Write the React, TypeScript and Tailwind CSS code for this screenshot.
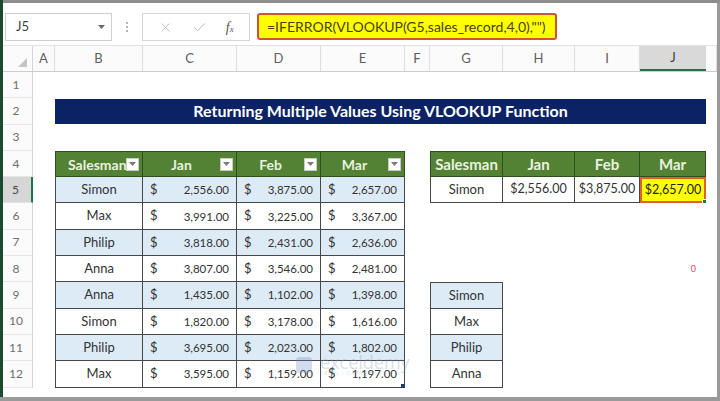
import { X, Check } from "lucide-react"

const COLS = "grid grid-cols-[33px_22px_88px_94px_84px_84px_25px_73px_72px_65px_66px_11px]"

const sales = [
    ["Simon", "2,556.00", "3,875.00", "2,657.00"],
    ["Max", "3,991.00", "3,225.00", "3,367.00"],
    ["Philip", "3,818.00", "2,431.00", "2,636.00"],
    ["Anna", "3,807.00", "3,546.00", "2,481.00"],
    ["Anna", "1,435.00", "1,102.00", "1,398.00"],
    ["Simon", "1,820.00", "3,178.00", "1,616.00"],
    ["Philip", "3,695.00", "2,023.00", "1,802.00"],
    ["Max", "3,595.00", "1,159.00", "1,197.00"],
]

const lookupList = ["Simon", "Max", "Philip", "Anna"]

const FilterButton = () => (
    <span className="w-[13px] h-[13px] bg-white border border-[#c9c9c9] flex items-center justify-center shrink-0 mr-[3px]">
        <svg width="7" height="4" viewBox="0 0 7 4"><path d="M0 0h7L3.5 4z" fill="#7a7a7a" /></svg>
    </span>
)

const RowNum = ({ n, active }: { n: number; active?: boolean }) => (
    <div
        className={
            active
                ? "flex items-center justify-center text-[12px] text-[#4a4a4a] bg-[#d6d6d6] border-r-2 border-r-[#217346] border-b border-b-[#e3e3e3]"
                : "flex items-center justify-center text-[12px] text-[#6e6e6e] bg-[#fbfbfb] border-r border-r-[#d4d4d4] border-b border-b-[#e6e6e6]"
        }
    >
        {n}
    </div>
)

const Money = ({ v, blue }: { v: string; blue: boolean }) => (
    <div className={`flex items-center justify-between px-[7px] text-[12px] text-[#333] border-r border-b border-[#474747] ${blue ? "bg-[#ddebf7]" : "bg-white"}`}>
        <span className="text-[13px]">$</span>
        <span className="text-[11.5px]">{v}</span>
    </div>
)

export default function App() {
    return (
        <div className="relative w-[720px] h-[401px] overflow-hidden bg-white font-['Lato',sans-serif]">
            <div className="h-[3px] bg-[#8e8e8e]" />

            {/* formula bar */}
            <div className="h-[43px] flex items-start pt-[10px] pl-[5px] border-b border-[#e2e2e2]">
                <div className="w-[107px] h-[28px] border border-[#cfcfcf] flex items-center justify-between pl-[10px] pr-[6px]">
                    <span className="text-[13px] text-[#444]">J5</span>
                    <svg width="7" height="4" viewBox="0 0 7 4"><path d="M0 0h7L3.5 4z" fill="#6a6a6a" /></svg>
                </div>
                <div className="w-[30px] h-[28px] flex flex-col items-center justify-center gap-[2px]">
                    <span className="w-[2px] h-[2px] bg-[#b5b5b5]" />
                    <span className="w-[2px] h-[2px] bg-[#b5b5b5]" />
                    <span className="w-[2px] h-[2px] bg-[#b5b5b5]" />
                </div>
                <div className="w-[108px] h-[28px] border border-[#d6d6d6] flex items-center justify-around px-[6px]">
                    <X size={15} strokeWidth={1.4} color="#b9b9b9" />
                    <Check size={15} strokeWidth={1.6} color="#b9b9b9" />
                    <span className="font-['Liberation_Serif',serif] italic text-[14px] text-[#555]">f<span className="text-[9px]">x</span></span>
                </div>
                <div className="ml-[7px] w-[300px] h-[27px] bg-[#ffff00] border-2 border-[#d2542e] rounded-[3px] flex items-center pl-[8px] text-[14px] text-[#4a4200] whitespace-nowrap">
                    =IFERROR(VLOOKUP(G5,sales_record,4,0),"")
                </div>
            </div>

            {/* column headers */}
            <div className={`${COLS} h-[26px] border-b border-[#cdcdcd] bg-[#fbfbfb] text-[13px] text-[#5e5e5e]`}>
                <div className="flex items-end justify-end pr-[5px] pb-[4px] border-r border-[#d4d4d4]">
                    <svg width="9" height="9" viewBox="0 0 9 9"><path d="M9 0v9H0z" fill="#c4c4c4" /></svg>
                </div>
                {["A", "B", "C", "D", "E", "F", "G", "H", "I"].map((c) => (
                    <div key={c} className="flex items-center justify-center border-r border-[#dedede]">{c}</div>
                ))}
                <div className="flex items-center justify-center bg-[#d9d9d9] border-b-2 border-[#217346] text-[#3e3e3e]">J</div>
                <div className="border-r border-[#dedede]" />
            </div>

            {/* rows 1-3 */}
            <div className={`${COLS} h-[26.3px]`}>
                <RowNum n={1} />
            </div>
            <div className={`${COLS} h-[26.3px]`}>
                <RowNum n={2} />
                <div />
                <div className="col-span-9 my-[1px] bg-[#0b2264] flex items-center justify-center text-white font-bold text-[16px]">
                    Returning Multiple Values Using VLOOKUP Function
                </div>
            </div>
            <div className={`${COLS} h-[26.3px]`}>
                <RowNum n={3} />
            </div>

            {/* row 4: headers */}
            <div className={`${COLS} h-[26.3px]`}>
                <RowNum n={4} />
                <div />
                <div className="flex items-center bg-[#548235] border-l border-t border-r border-b border-[#2f4f1f] text-[#e8f2de] font-bold text-[14px]">
                    <span className="flex-1 overflow-hidden whitespace-nowrap pl-[12px]">Salesman</span>
                    <FilterButton />
                </div>
                {["Jan", "Feb", "Mar"].map((m) => (
                    <div key={m} className="flex items-center bg-[#548235] border-t border-r border-b border-[#2f4f1f] text-[#e8f2de] font-bold text-[14px]">
                        <span className="flex-1 text-center">{m}</span>
                        <FilterButton />
                    </div>
                ))}
                <div />
                <div className="flex items-center justify-center bg-[#548235] border-l border-t border-r border-b border-[#2f4f1f] text-[#e8f2de] font-bold text-[15px]">Salesman</div>
                {["Jan", "Feb", "Mar"].map((m) => (
                    <div key={m} className="flex items-center justify-center bg-[#548235] border-t border-r border-b border-[#2f4f1f] text-[#e8f2de] font-bold text-[15px]">{m}</div>
                ))}
            </div>

            {/* rows 5-12 */}
            {sales.map((row, i) => {
                const n = i + 5
                const blue = i % 2 === 0
                const listIdx = n - 9
                return (
                    <div key={n} className={`${COLS} h-[26.3px]`}>
                        <RowNum n={n} active={n === 5} />
                        <div />
                        <div className={`flex items-center justify-center text-[13px] text-[#333] border-l border-r border-b border-[#474747] ${blue ? "bg-[#ddebf7]" : "bg-white"}`}>
                            {row[0]}
                        </div>
                        <Money v={row[1]} blue={blue} />
                        <Money v={row[2]} blue={blue} />
                        <Money v={row[3]} blue={blue} />
                        <div />
                        {n === 5 ? (
                            <>
                                <div className="flex items-center justify-center text-[13px] text-[#333] border-l border-r border-b border-[#474747]">Simon</div>
                                <div className="flex items-center justify-center text-[12.5px] text-[#333] border-r border-b border-[#474747]">$2,556.00</div>
                                <div className="flex items-center justify-center text-[12.5px] text-[#333] border-r border-b border-[#474747]">$3,875.00</div>
                                <div className="relative flex items-center justify-center text-[12.5px] text-[#222] bg-[#ffff00] border-2 border-[#e0602a]">
                                    $2,657.00
                                    <span className="absolute -right-[3px] -bottom-[3px] w-[5px] h-[5px] bg-[#217346] border border-white" />
                                </div>
                            </>
                        ) : listIdx >= 0 ? (
                            <>
                                <div className={`flex items-center justify-center text-[13px] text-[#333] border-l border-r border-b border-[#474747] ${listIdx === 0 ? "border-t" : ""} ${listIdx % 2 === 0 ? "bg-[#ddebf7]" : "bg-white"}`}>
                                    {lookupList[listIdx]}
                                </div>
                                <div />
                                <div />
                                <div />
                            </>
                        ) : (
                            <>
                                <div />
                                <div />
                                <div />
                                <div className="flex items-center justify-end pr-[10px] text-[9px] text-[#e0486a]">{n === 8 ? "0" : ""}</div>
                            </>
                        )}
                        <div />
                    </div>
                )
            })}

            {/* watermark */}
            <div className="absolute left-[296px] top-[353px] flex items-center gap-[8px] opacity-30 pointer-events-none">
                <span className="w-[16px] h-[16px] rounded-[4px] bg-[#6f8fc9]" />
                <div className="flex flex-col leading-none">
                    <span className="text-[18px] text-[#7f99cc] font-['Open_Sans',sans-serif]">exceldemy</span>
                    <span className="text-[5px] text-[#7f99cc] tracking-[1px]">EXCEL · DATA · BI</span>
                </div>
            </div>
            <span className="absolute left-[401px] top-[384px] w-[4px] h-[4px] bg-[#1f3a7a]" />

            {/* frame edges */}
            <div className="absolute left-0 top-0 w-[3px] h-full bg-[#1c4a30]" />
            <div className="absolute right-0 top-[3px] w-[3px] h-full bg-[#9a9a9a]" />
            <div className="absolute left-0 bottom-0 w-full h-[4px] bg-[#9a9a9a]" />
        </div>
    )
}
